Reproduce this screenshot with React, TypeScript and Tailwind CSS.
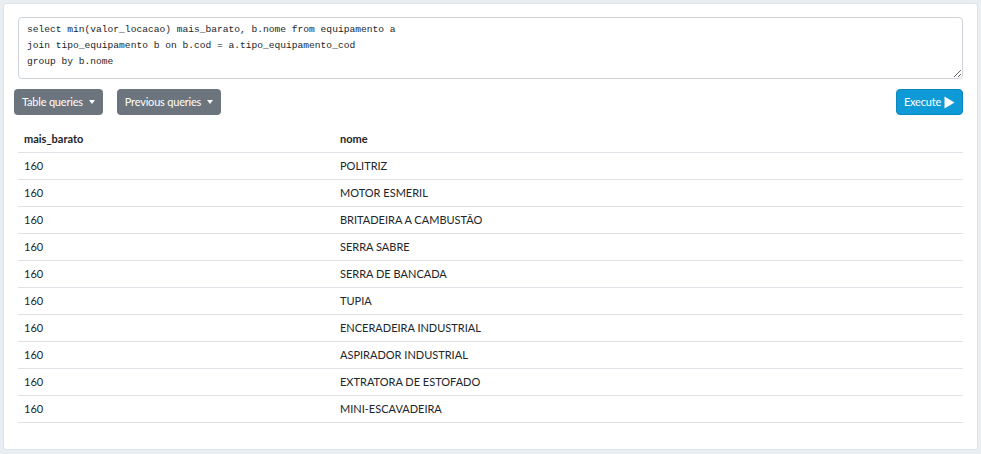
const rows = [
  "POLITRIZ",
  "MOTOR ESMERIL",
  "BRITADEIRA A CAMBUSTÃO",
  "SERRA SABRE",
  "SERRA DE BANCADA",
  "TUPIA",
  "ENCERADEIRA INDUSTRIAL",
  "ASPIRADOR INDUSTRIAL",
  "EXTRATORA DE ESTOFADO",
  "MINI-ESCAVADEIRA",
];

function Caret() {
  return <span className="ml-[6px] inline-block h-0 w-0 border-x-[3.5px] border-t-[4px] border-x-transparent border-t-white align-middle" />;
}

export default function App() {
  return (
    <div className="h-[454px] w-[981px] bg-[#e9eef3] p-[3px] font-['Lato',sans-serif] text-[11px] text-[#212529]">
      <div className="h-[447px] rounded-[3px] border border-[#dde3ea] bg-white px-[10px] pt-[13px]">
        <div className="px-[4px]">
          <textarea
            className="block h-[62px] w-full resize-y rounded-[4px] border border-[#ced4da] px-[8px] pt-[4px] font-['Liberation_Mono',monospace] text-[9.6px] leading-[16px] text-[#212529] outline-none"
            defaultValue={
              "select min(valor_locacao) mais_barato, b.nome from equipamento a\njoin tipo_equipamento b on b.cod = a.tipo_equipamento_cod\ngroup by b.nome"
            }
          />
        </div>
        <div className="mt-[10px] flex items-center">
          <button className="flex h-[26px] items-center rounded-[4px] bg-[#6c757d] px-[8px] tracking-[-0.2px] text-white">
            Table queries
            <Caret />
          </button>
          <button className="ml-[14px] flex h-[26px] items-center rounded-[4px] bg-[#6c757d] px-[8px] tracking-[-0.2px] text-white">
            Previous queries
            <Caret />
          </button>
          <button className="ml-auto mr-[4px] flex h-[26px] items-center rounded-[4px] border border-[#0b86bd] bg-[#0e9ad7] px-[7px] tracking-[-0.2px] text-white">
            Execute
            <svg className="ml-[3px]" width="11" height="13" viewBox="0 0 11 13">
              <path d="M0.5 0.5 L10.5 6.5 L0.5 12.5 Z" fill="white" />
            </svg>
          </button>
        </div>
        <div className="mt-[11px] px-[4px]">
          <div className="grid h-[27px] grid-cols-[322px_1fr] items-center border-b border-[#dee2e6] font-bold">
            <div className="pl-[6px]">mais_barato</div>
            <div>nome</div>
          </div>
          {rows.map((nome) => (
            <div key={nome} className="grid h-[27px] grid-cols-[322px_1fr] items-center border-b border-[#dee2e6]">
              <div className="pl-[6px]">160</div>
              <div>{nome}</div>
            </div>
          ))}
        </div>
      </div>
    </div>
  );
}
